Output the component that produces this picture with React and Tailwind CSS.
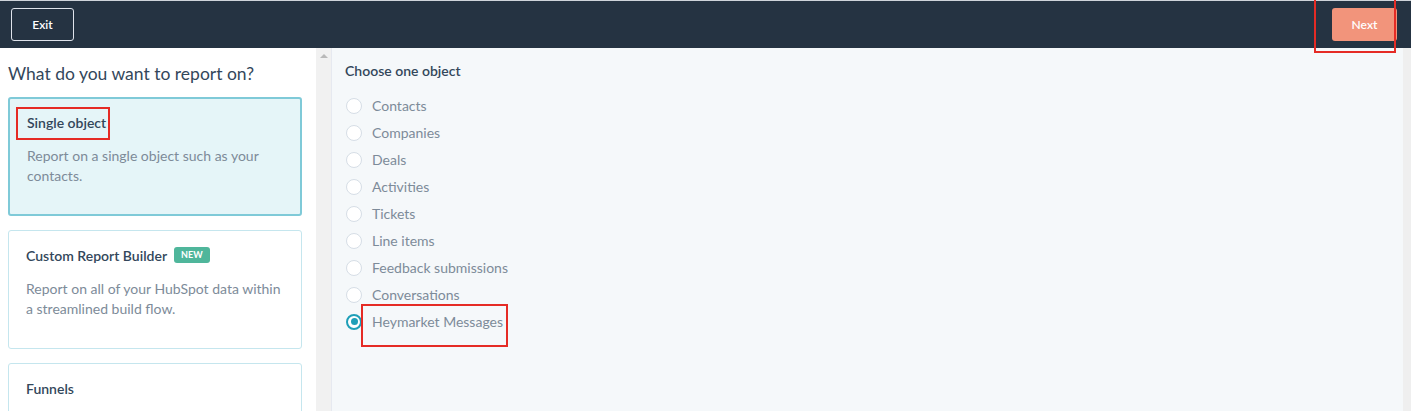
const objects = [
  "Contacts",
  "Companies",
  "Deals",
  "Activities",
  "Tickets",
  "Line items",
  "Feedback submissions",
  "Conversations",
  "Heymarket Messages",
];

const Radio = ({ checked }) =>
  checked ? (
    <span className="w-4 h-4 rounded-full border-2 border-[#1f9fb8] bg-white flex items-center justify-center shrink-0">
      <span className="w-[7px] h-[7px] rounded-full bg-[#1f9fb8]" />
    </span>
  ) : (
    <span className="w-4 h-4 rounded-full border border-[#d6dee6] bg-white shrink-0" />
  );

const Card = ({ active, title, badge, children }) => (
  <div
    className={`rounded-[3px] px-[17px] h-[119px] ${
      active
        ? "bg-[#e5f5f8] border-2 border-[#7fcad8] pt-[13px]"
        : "bg-white border border-[#c5e6ee] pt-[14px]"
    }`}
  >
    <div className="flex items-center gap-[7px] h-5">
      <span className="text-[14px] font-semibold text-[#33475b]">{title}</span>
      {badge && (
        <span className="bg-[#4fb69b] text-white text-[9px] font-bold px-[7px] h-4 leading-4 rounded-[3px]">
          {badge}
        </span>
      )}
    </div>
    {children && (
      <p className="mt-[14px] text-[14px] leading-5 text-[#7d8b99]">{children}</p>
    )}
  </div>
);

export default function App() {
  return (
    <div
      className="relative w-[1411px] h-[411px] overflow-hidden bg-white"
      style={{ fontFamily: "Lato, 'Open Sans', sans-serif" }}
    >
      <header className="h-12 bg-[#253342] border-t border-[#cfd4da] flex items-center justify-between pl-[11px] pr-[14px]">
        <button className="w-[63px] h-[33px] rounded-[3px] border border-[#dfe3eb] text-white text-[12px] font-semibold">
          Exit
        </button>
        <button className="w-[65px] h-[33px] rounded-[3px] bg-[#f2947b] text-white text-[12px] font-semibold">
          Next
        </button>
      </header>

      <div className="flex h-[363px]">
        <aside className="w-[316px] shrink-0 pl-2 pr-[14px] pt-[14px] overflow-hidden">
          <h1 className="text-[17.5px] leading-6 text-[#33475b] mb-[11px]">
            What do you want to report on?
          </h1>
          <div className="flex flex-col gap-[14px]">
            <Card active title="Single object">
              Report on a single object such as your contacts.
            </Card>
            <Card title="Custom Report Builder" badge="NEW">
              Report on all of your HubSpot data within a streamlined build flow.
            </Card>
            <Card title="Funnels" />
          </div>
        </aside>

        <div className="w-[16px] shrink-0 bg-[#f1f1f1] flex justify-center pt-[6px] border-r border-[#e6e9f0]">
          <span className="w-0 h-0 border-l-[4px] border-r-[4px] border-b-[4px] border-l-transparent border-r-transparent border-b-[#b9b9b9]" />
        </div>

        <main className="flex-1 bg-[#f5f8fa] pl-[13px] pt-[13px]">
          <h2 className="text-[14px] font-semibold leading-5 text-[#33475b] mb-[11px]">
            Choose one object
          </h2>
          <ul className="flex flex-col">
            {objects.map((o, i) => (
              <li key={o} className="h-[27px] flex items-center gap-[10px] pl-[1px]">
                <Radio checked={i === objects.length - 1} />
                <span className="text-[14px] text-[#7d8b99]">{o}</span>
              </li>
            ))}
          </ul>
        </main>

        <div className="w-2 shrink-0 bg-[#efefef]" />
      </div>

      <div className="absolute left-[16px] top-[107px] w-[94px] h-[33px] border-2 border-[#e52b25]" />
      <div className="absolute left-[1314px] top-[-2px] w-[82px] h-[55px] border-2 border-[#e52b25]" />
      <div className="absolute left-[361px] top-[304px] w-[147px] h-[43px] border-2 border-[#e52b25]" />
    </div>
  );
}
